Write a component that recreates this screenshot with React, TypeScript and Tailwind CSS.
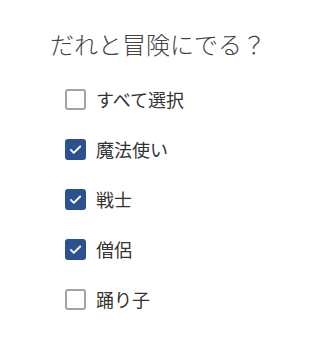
import { useState } from 'react';

const members = ['魔法使い', '戦士', '僧侶', '踊り子'];

function Box({ checked }: { checked: boolean }) {
  if (checked) {
    return (
      <span className="flex h-[21px] w-[21px] shrink-0 items-center justify-center rounded-[3px] bg-[#2c5191]">
        <svg viewBox="0 0 20 20" className="h-[17px] w-[17px]" fill="none" stroke="white" strokeWidth={2.2} strokeLinecap="round" strokeLinejoin="round">
          <path d="M4.5 10.5l3.5 3.5 7.5-7.5" />
        </svg>
      </span>
    );
  }
  return <span className="block h-[21px] w-[21px] shrink-0 rounded-[3px] border-2 border-[#a0a4a8] bg-white" />;
}

export default function App() {
  const [selected, setSelected] = useState<string[]>(['魔法使い', '戦士', '僧侶']);
  const all = selected.length === members.length;

  const toggle = (name: string) =>
    setSelected((s) => (s.includes(name) ? s.filter((n) => n !== name) : [...s, name]));

  return (
    <div className="h-[342px] w-[321px] bg-white pl-[65px] pt-[28px] text-[#333]" style={{ fontFamily: '"Noto Sans CJK JP", "Noto Sans", sans-serif' }}>
      <h1 className="-ml-[15px] mb-[14px] text-[24px] font-light leading-[32px] text-[#444]">だれと冒険にでる？</h1>
      <div className="flex flex-col">
        <label className="flex h-[50px] items-center gap-[10px] text-[18px] leading-none" onClick={() => setSelected(all ? [] : members)}>
          <Box checked={all} />
          <span>すべて選択</span>
        </label>
        {members.map((m) => (
          <label key={m} className="flex h-[50px] items-center gap-[10px] text-[18px] leading-none" onClick={() => toggle(m)}>
            <Box checked={selected.includes(m)} />
            <span>{m}</span>
          </label>
        ))}
      </div>
    </div>
  );
}
